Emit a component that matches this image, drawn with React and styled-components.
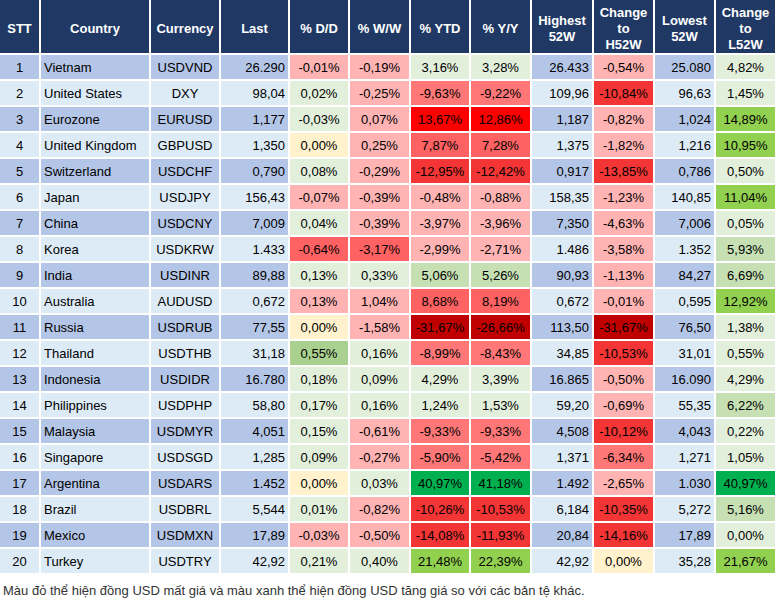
import React from "react";
import styled, { createGlobalStyle } from "styled-components";

const GlobalStyle = createGlobalStyle`
  body {
    margin: 0;
    background: #fff;
    font-family: "Liberation Sans", Arial, sans-serif;
  }
`;

const COLORS = {
  lp: "#FFB3B3",
  lg: "#E2EFDA",
  y: "#FFF2CC",
  r1: "#FF7777",
  rm: "#FF6262",
  r2: "#F33535",
  r3: "#FF0000",
  r4: "#C00000",
  g1: "#C6E0B4",
  ga: "#A9D08E",
  g2: "#92D050",
  g3: "#00B050",
};

const headers = [
  ["STT"],
  ["Country"],
  ["Currency"],
  ["Last"],
  ["% D/D"],
  ["% W/W"],
  ["% YTD"],
  ["% Y/Y"],
  ["Highest", "52W"],
  ["Change", "to", "H52W"],
  ["Lowest", "52W"],
  ["Change", "to", "L52W"],
];

const rows = [
  ["Vietnam", "USDVND", "26.290", "-0,01%", "lp", "-0,19%", "lp", "3,16%", "lg", "3,28%", "lg", "26.433", "-0,54%", "lp", "25.080", "4,82%", "lg"],
  ["United States", "DXY", "98,04", "0,02%", "lg", "-0,25%", "lp", "-9,63%", "r1", "-9,22%", "r1", "109,96", "-10,84%", "r2", "96,63", "1,45%", "lg"],
  ["Eurozone", "EURUSD", "1,177", "-0,03%", "lg", "0,07%", "lp", "13,67%", "r3", "12,86%", "r3", "1,187", "-0,82%", "lp", "1,024", "14,89%", "g2"],
  ["United Kingdom", "GBPUSD", "1,350", "0,00%", "y", "0,25%", "lp", "7,87%", "rm", "7,28%", "rm", "1,375", "-1,82%", "lp", "1,216", "10,95%", "g2"],
  ["Switzerland", "USDCHF", "0,790", "0,08%", "lg", "-0,29%", "lp", "-12,95%", "r2", "-12,42%", "r2", "0,917", "-13,85%", "r2", "0,786", "0,50%", "lg"],
  ["Japan", "USDJPY", "156,43", "-0,07%", "lp", "-0,39%", "lp", "-0,48%", "lp", "-0,88%", "lp", "158,35", "-1,23%", "lp", "140,85", "11,04%", "g2"],
  ["China", "USDCNY", "7,009", "0,04%", "lg", "-0,39%", "lp", "-3,97%", "lp", "-3,96%", "lp", "7,350", "-4,63%", "lp", "7,006", "0,05%", "lg"],
  ["Korea", "USDKRW", "1.433", "-0,64%", "rm", "-3,17%", "rm", "-2,99%", "lp", "-2,71%", "lp", "1.486", "-3,58%", "lp", "1.352", "5,93%", "g1"],
  ["India", "USDINR", "89,88", "0,13%", "lg", "0,33%", "lg", "5,06%", "g1", "5,26%", "g1", "90,93", "-1,13%", "lp", "84,27", "6,69%", "g1"],
  ["Australia", "AUDUSD", "0,672", "0,13%", "lp", "1,04%", "lp", "8,68%", "rm", "8,19%", "rm", "0,672", "-0,01%", "lp", "0,595", "12,92%", "g2"],
  ["Russia", "USDRUB", "77,55", "0,00%", "y", "-1,58%", "lp", "-31,67%", "r4", "-26,66%", "r4", "113,50", "-31,67%", "r4", "76,50", "1,38%", "lg"],
  ["Thailand", "USDTHB", "31,18", "0,55%", "ga", "0,16%", "lg", "-8,99%", "r1", "-8,43%", "r1", "34,85", "-10,53%", "r2", "31,01", "0,55%", "lg"],
  ["Indonesia", "USDIDR", "16.780", "0,18%", "lg", "0,09%", "lg", "4,29%", "lg", "3,39%", "lg", "16.865", "-0,50%", "lp", "16.090", "4,29%", "lg"],
  ["Philippines", "USDPHP", "58,80", "0,17%", "lg", "0,16%", "lg", "1,24%", "lg", "1,53%", "lg", "59,20", "-0,69%", "lp", "55,35", "6,22%", "g1"],
  ["Malaysia", "USDMYR", "4,051", "0,15%", "lg", "-0,61%", "lp", "-9,33%", "r1", "-9,33%", "r1", "4,508", "-10,12%", "r2", "4,043", "0,22%", "lg"],
  ["Singapore", "USDSGD", "1,285", "0,09%", "lg", "-0,27%", "lp", "-5,90%", "r1", "-5,42%", "r1", "1,371", "-6,34%", "r1", "1,271", "1,05%", "lg"],
  ["Argentina", "USDARS", "1.452", "0,00%", "y", "0,03%", "lg", "40,97%", "g3", "41,18%", "g3", "1.492", "-2,65%", "lp", "1.030", "40,97%", "g3"],
  ["Brazil", "USDBRL", "5,544", "0,01%", "lg", "-0,82%", "lp", "-10,26%", "r2", "-10,53%", "r2", "6,184", "-10,35%", "r2", "5,272", "5,16%", "g1"],
  ["Mexico", "USDMXN", "17,89", "-0,03%", "lp", "-0,50%", "lp", "-14,08%", "r2", "-11,93%", "r2", "20,84", "-14,16%", "r2", "17,89", "0,00%", "lg"],
  ["Turkey", "USDTRY", "42,92", "0,21%", "lg", "0,40%", "lg", "21,48%", "g2", "22,39%", "g2", "42,92", "0,00%", "y", "35,28", "21,67%", "g2"],
];

const App = () => {
  return (
    <>
      <GlobalStyle />
      <Page>
        <Table>
          {headers.map((lines, i) => (
            <HeadCell key={"h" + i}>
              {lines.map((l, j) => (
                <span key={j}>{l}</span>
              ))}
            </HeadCell>
          ))}
          {rows.map((r, i) => {
            const odd = i % 2 === 0;
            const [country, cur, last, dd, ddc, ww, wwc, ytd, ytdc, yy, yyc, hi, ch, chc, lo, cl, clc] = r;
            return (
              <React.Fragment key={i}>
                <Cell $odd={odd} $align="center">{i + 1}</Cell>
                <Cell $odd={odd} $align="left">{country}</Cell>
                <Cell $odd={odd} $align="center">{cur}</Cell>
                <Cell $odd={odd} $align="right">{last}</Cell>
                <Pct $bg={COLORS[ddc]}>{dd}</Pct>
                <Pct $bg={COLORS[wwc]}>{ww}</Pct>
                <Pct $bg={COLORS[ytdc]}>{ytd}</Pct>
                <Pct $bg={COLORS[yyc]}>{yy}</Pct>
                <Cell $odd={odd} $align="right">{hi}</Cell>
                <Pct $bg={COLORS[chc]}>{ch}</Pct>
                <Cell $odd={odd} $align="right">{lo}</Cell>
                <Pct $bg={COLORS[clc]}>{cl}</Pct>
              </React.Fragment>
            );
          })}
        </Table>
        <Note>
          Màu đỏ thể hiện đồng USD mất giá và màu xanh thể hiện đồng USD tăng giá so với các bản tệ khác.
        </Note>
      </Page>
    </>
  );
};

const Page = styled.div`
  width: 777px;
`;

const Table = styled.div`
  display: grid;
  grid-template-columns: 39px 108px 68px 67px 58px 59px 58px 59px 60px 59px 59px 59px;
  grid-template-rows: 53px;
  grid-auto-rows: 24px;
  gap: 2px;
  background: #fff;
  font-size: 13px;
  color: #000;
`;

const HeadCell = styled.div`
  background: #1f3864;
  color: #fff;
  font-weight: bold;
  display: flex;
  flex-direction: column;
  align-items: center;
  justify-content: center;
  text-align: center;
  line-height: 16px;
  padding-top: 4px;
`;

const Cell = styled.div`
  background: ${(p) => (p.$odd ? "#B4C6E7" : "#DDEBF7")};
  display: flex;
  align-items: center;
  justify-content: ${(p) =>
    p.$align === "left" ? "flex-start" : p.$align === "right" ? "flex-end" : "center"};
  padding: 0 3px;
  white-space: nowrap;
`;

const Pct = styled.div`
  background: ${(p) => p.$bg};
  display: flex;
  align-items: center;
  justify-content: center;
  white-space: nowrap;
`;

const Note = styled.div`
  font-size: 13px;
  color: #333;
  padding: 10px 0 0 3px;
`;

export default App;
